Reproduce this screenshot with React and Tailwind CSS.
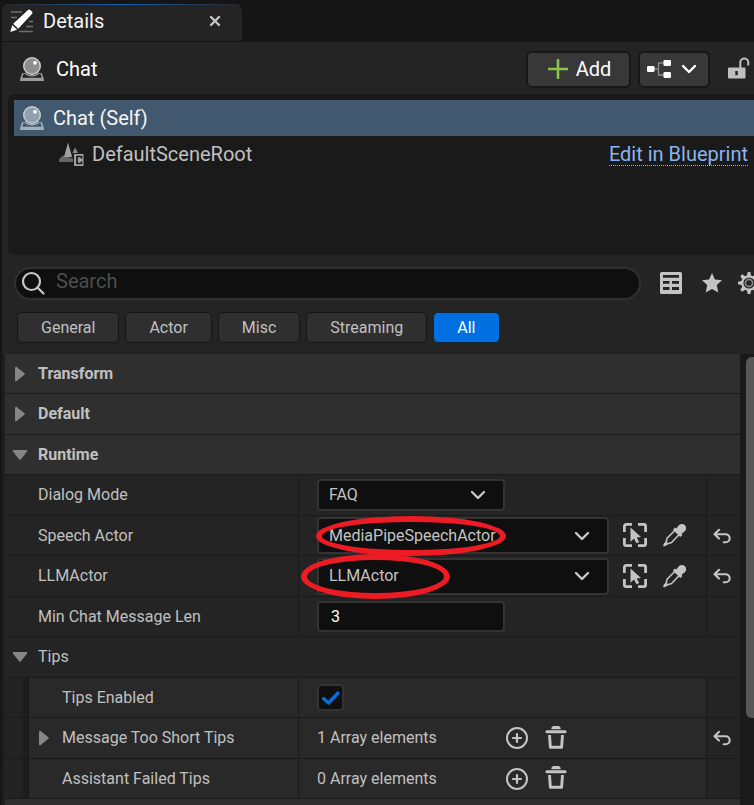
import React from "react";

function PencilIcon() {
  return (
    <svg width="24" height="24" viewBox="0 0 24 24" aria-hidden="true">
      <g stroke="#6f6f6f" strokeWidth="1.4">
        <path d="M1 3h11M1 8.500h6M19 12.500h4M16 17.500h7M9 22.500h14" />
      </g>
      <path d="M18 1a1.600 1.600 0 0 1 2.300 0l1.600 1.600a1.600 1.600 0 0 1 0 2.300L8.200 19.800l-5-5z" fill="#fff" />
      <path d="M2.400 16l4.700 4.700L.2 23z" fill="#fff" />
    </svg>
  );
}

function ActorIcon({ tint = "#8e8e8e", base = "#9c9c9c" }) {
  return (
    <svg width="24" height="24" viewBox="0 0 24 24" aria-hidden="true" className="shrink-0">
      <path d="M3 16L1.200 21.500M21 16l1.800 5.500" stroke={base} strokeWidth="1.600" />
      <path d="M.4 20.800h23.200L24 24H0z" fill={base} />
      <circle cx="12" cy="9" r="9" fill="#c9cdd0" />
      <circle cx="12" cy="9" r="7.500" fill={tint} />
      <path d="M4.500 16.200c4.500 3.300 10.500 3.300 15 0" fill="none" stroke={base} strokeWidth="1.400" />
      <circle cx="15" cy="5.800" r="1.900" fill="#fff" />
    </svg>
  );
}

function SceneIcon() {
  return (
    <svg width="26" height="24" viewBox="0 0 26 24" aria-hidden="true">
      <path d="M3.500 13.500L0 17.200V20h14v-3.500z" fill="#666666" />
      <path d="M9 .5L13.200 15H5z" fill="#a0a0a0" />
      <path d="M16 5.500l3 5.500h-5.500z" fill="#8a8a8a" />
      <rect x="15" y="12" width="9.500" height="12" fill="#a0a0a0" />
      <path d="M22.500 16.500v-2h-4.500v7h4.500v-2" fill="none" stroke="#1a1a1a" strokeWidth="1.700" />
    </svg>
  );
}

function CloseIcon() {
  return (
    <svg width="12" height="12" viewBox="0 0 12 12" aria-hidden="true">
      <path d="M2 2l8 8M10 2l-8 8" stroke="#c4c4c4" strokeWidth="2.400" strokeLinecap="round" />
    </svg>
  );
}

function Chevron({ color = "#c8c8c8" }) {
  return (
    <svg width="16" height="10" viewBox="0 0 16 10" aria-hidden="true">
      <path d="M2 2l6 6 6-6" fill="none" stroke={color} strokeWidth="2.400" strokeLinecap="round" strokeLinejoin="round" />
    </svg>
  );
}

function BlueprintIcon() {
  return (
    <svg width="24" height="18" viewBox="0 0 24 18" aria-hidden="true">
      <path d="M7 9h5M17 3h-5.500v12H17" fill="none" stroke="#8a8a8a" strokeWidth="1.300" />
      <rect x="0" y="6" width="7.500" height="6" rx="1.300" fill="#fff" />
      <rect x="16.500" y="0" width="7.500" height="6" rx="1.300" fill="#fff" />
      <rect x="16.500" y="12" width="7.500" height="6" rx="1.300" fill="#fff" />
    </svg>
  );
}

function LockIcon() {
  return (
    <svg width="22" height="22" viewBox="0 0 22 22" aria-hidden="true">
      <path d="M12.300 11V5.500a4 4 0 0 1 8 0V8.500" fill="none" stroke="#c0c0c0" strokeWidth="2" />
      <path fillRule="evenodd" d="M1 10.500h15.500a1 1 0 0 1 1 1V20.500a1 1 0 0 1-1 1H1a1 1 0 0 1-1-1V11.500a1 1 0 0 1 1-1zM7.300 14v4.300h2.500V14z" fill="#c0c0c0" />
    </svg>
  );
}

function SearchIcon() {
  return (
    <svg width="24" height="24" viewBox="0 0 24 24" aria-hidden="true">
      <circle cx="10.500" cy="10.500" r="8.500" fill="none" stroke="#c8c8c8" strokeWidth="2.200" />
      <path d="M16.500 16.500L22.500 22.500" stroke="#c8c8c8" strokeWidth="2.200" strokeLinecap="round" />
    </svg>
  );
}

function TableIcon() {
  return (
    <svg width="22" height="22" viewBox="0 0 22 22" aria-hidden="true">
      <path
        fillRule="evenodd"
        d="M1.500 0h19A1.500 1.500 0 0 1 22 1.500v19a1.500 1.500 0 0 1-1.500 1.500h-19A1.500 1.500 0 0 1 0 20.500v-19A1.500 1.500 0 0 1 1.500 0zM3 3v2.700h16V3zM3 9v2.700h6.500V9zM12 9v2.700h7V9zM3 15v3h6.500V15zM12 15v3h7V15z"
        fill="#c4c4c4"
      />
    </svg>
  );
}

function StarIcon() {
  return (
    <svg width="20" height="20" viewBox="0 0 20 20" aria-hidden="true">
      <path d="M10 0l2.900 6.400 7.100.8-5.200 4.800L16.300 19.500 10 16 3.700 19.500 5.200 12 0 7.200l7.100-.8z" fill="#c4c4c4" />
    </svg>
  );
}

const teeth = [0, 45, 90, 135, 180, 225, 270, 315];

function GearIcon() {
  return (
    <svg width="22" height="22" viewBox="0 0 22 22" aria-hidden="true">
      <circle cx="11" cy="11" r="6.700" fill="none" stroke="#c4c4c4" strokeWidth="2.200" />
      <circle cx="11" cy="11" r="3.600" fill="none" stroke="#8a8a8a" strokeWidth="1.600" />
      {teeth.map((angle) => (
        <path key={angle} d="M9.700 0h2.600l.9 4.500H8.800z" fill="#c4c4c4" transform={`rotate(${angle} 11 11)`} />
      ))}
    </svg>
  );
}

function PickIcon() {
  return (
    <svg width="24" height="24" viewBox="0 0 24 24" aria-hidden="true">
      <path d="M1.400 9V3.200a1.800 1.800 0 0 1 1.800-1.800H9M15 1.400h5.800A1.800 1.800 0 0 1 22.600 3.200V9M22.600 15v5.800a1.800 1.800 0 0 1-1.800 1.800H15M9 22.600H3.200A1.800 1.800 0 0 1 1.400 20.800V15" fill="none" stroke="#c4c4c4" strokeWidth="2.800" />
      <path d="M7.500 4.500L18 14l-4.300.4 2.500 4.600-2.800 1.300-2.300-4.800-3.600 3.200z" fill="#c4c4c4" />
    </svg>
  );
}

function DropperIcon() {
  return (
    <svg width="23" height="24" viewBox="0 0 23 24" aria-hidden="true">
      <path d="M12 7.300L4 15.300 3.200 19.300 1 22.600 4.600 20.700l4-1.200L16.200 11.500" fill="none" stroke="#c4c4c4" strokeWidth="1.600" strokeLinejoin="round" />
      <path d="M.3 21.200l1.800 1.800 3.200-2.300-2.300-2.400z" fill="#c4c4c4" />
      <path d="M15 3.200a4.300 4.300 0 1 1 5.500 6l-2 1.600 1 1.200-2.200 2L9.900 6.700l2-2.200 1.500 1z" fill="#c4c4c4" />
    </svg>
  );
}

function ResetIcon() {
  return (
    <svg width="18" height="16" viewBox="0 0 18 16" aria-hidden="true">
      <path d="M6 1.800L1.500 6.200 6 10.600M2 6.200h10.700a4 4 0 0 1 0 8h-2" fill="none" stroke="#c4c4c4" strokeWidth="2.100" strokeLinecap="round" strokeLinejoin="round" />
    </svg>
  );
}

function AddCircleIcon() {
  return (
    <svg width="22" height="22" viewBox="0 0 22 22" aria-hidden="true">
      <circle cx="11" cy="11" r="10" fill="none" stroke="#c4c4c4" strokeWidth="2" />
      <path d="M11 7v8M7 11h8" stroke="#c4c4c4" strokeWidth="2.200" strokeLinecap="round" />
    </svg>
  );
}

function TrashIcon() {
  return (
    <svg width="22" height="23" viewBox="0 0 22 23" aria-hidden="true">
      <path d="M6.300 3.200a3 3 0 0 1 2.700-3.200h4a3 3 0 0 1 2.700 3.200z" fill="#c4c4c4" />
      <rect x="0.500" y="4.300" width="21" height="3" rx="1.300" fill="#c4c4c4" />
      <path d="M4.500 9l.9 12.300h11.200L17.500 9" fill="none" stroke="#c4c4c4" strokeWidth="2.900" strokeLinejoin="round" />
    </svg>
  );
}

function Arrow({ open }) {
  return open ? (
    <svg width="16" height="10" viewBox="0 0 16 10" aria-hidden="true">
      <path d="M1.500 0h13l1 1L8.500 9.700h-1L.5 1z" fill="#868686" />
    </svg>
  ) : (
    <svg width="10" height="16" viewBox="0 0 10 16" aria-hidden="true">
      <path d="M0 1.500v13l1 1L9.700 8.500v-1L1 .5z" fill="#868686" />
    </svg>
  );
}

function Section({ title, open, odd, plain }) {
  return (
    <div className={`border-b border-[#1a1a1a] ${odd ? "h-[41px]" : "h-10"} ${plain ? "bg-[#242424]" : "bg-[#2f2f2f]"}`}>
      <button type="button" aria-expanded={!!open} className={`flex h-full w-full items-center text-left ${plain ? "" : "font-bold"}`}>
        <span className="flex w-[33px] justify-center pr-1">
          <Arrow open={open} />
        </span>
        {title}
      </button>
    </div>
  );
}

function Row({ id, label, odd, nested, expandable, reset, children }) {
  return (
    <div className={`flex border-b border-[#1a1a1a] ${odd ? "h-[41px]" : "h-10"}`}>
      {nested && <div className="w-6 shrink-0 bg-linear-to-r from-[#232323] from-60% to-[#191919]" />}
      <div
        className={`flex shrink-0 items-center border-r border-[#1a1a1a] ${nested ? "w-[270px] bg-[#292929]" : "w-[294px] bg-[#242424] pl-[33px]"}`}
      >
        {nested && (
          <span className="flex w-[33px] shrink-0 pl-[10px]">
            {expandable && (
              <button type="button" aria-label={`Expand ${label}`}>
                <Arrow />
              </button>
            )}
          </span>
        )}
        <label htmlFor={id}>{label}</label>
      </div>
      <div className={`flex min-w-0 flex-1 items-center pl-[18px] ${nested ? "bg-[#292929]" : "bg-[#242424]"}`}>{children}</div>
      <div className="flex w-[34px] shrink-0 items-center justify-center border-l border-[#1a1a1a] bg-[#242424] pr-1">
        {reset && (
          <button type="button" aria-label={`Reset ${label}`}>
            <ResetIcon />
          </button>
        )}
      </div>
    </div>
  );
}

function Dropdown({ id, value, size, children }) {
  return (
    <div className={`relative shrink-0 ${size}`}>
      <select id={id} className="h-full w-full appearance-none rounded border-2 border-[#333333] bg-[#0f0f0f] pl-[10px] text-[#c4c4c4]">
        <option>{value}</option>
      </select>
      <span className="pointer-events-none absolute inset-y-0 right-[19px] flex items-center">
        <Chevron />
      </span>
      {children}
    </div>
  );
}

function ActorTools() {
  return (
    <>
      <button type="button" aria-label="Pick actor" className="ml-[14px] shrink-0 pb-px">
        <PickIcon />
      </button>
      <button type="button" aria-label="Use eyedropper" className="ml-4 shrink-0 pb-px">
        <DropperIcon />
      </button>
    </>
  );
}

function ArrayValue({ id, count }) {
  return (
    <>
      <output id={id} className="w-[189px] shrink-0">
        {count} Array elements
      </output>
      <button type="button" aria-label="Add element">
        <AddCircleIcon />
      </button>
      <button type="button" aria-label="Clear elements" className="ml-[17px] pb-[2px]">
        <TrashIcon />
      </button>
    </>
  );
}

const filters = ["General", "Actor", "Misc", "Streaming", "All"];

export default function App() {
  return (
    <div className="min-h-screen overflow-hidden border-l-2 border-[#151515] bg-[#242424] font-[Roboto,sans-serif] text-base text-[#c0c0c0]">
      <header className="flex h-[42px] items-end border-b border-[#151515] bg-[#151515]">
        <div className="w-60 overflow-hidden rounded-t-md bg-[#242424]">
          <div className="h-px bg-linear-to-r from-[#242424] via-[#0c64b8] to-[#242424]" />
          <div className="flex h-9 items-center pr-[21px] pb-1 pl-2">
            <PencilIcon />
            <span className="ml-[9px] flex-1 text-xl text-[#f4f4f4]">Details</span>
            <button type="button" aria-label="Close tab">
              <CloseIcon />
            </button>
          </div>
        </div>
      </header>

      <div className="flex h-[52px] items-center pt-[2px] pr-1 pl-[18px]">
        <ActorIcon />
        <h1 className="ml-3 flex-1 text-xl text-white">Chat</h1>
        <button type="button" className="flex h-[37px] w-[105px] items-center justify-center gap-2 rounded-md border-2 border-[#181818] bg-[#383838] pl-[2px] text-xl text-white">
          <svg width="20" height="20" viewBox="0 0 20 20" aria-hidden="true">
            <path d="M10 1v18M1 10h18" stroke="#8bc24a" strokeWidth="2.600" strokeLinecap="round" />
          </svg>
          Add
        </button>
        <button type="button" aria-label="Blueprint options" className="ml-[7px] flex h-[37px] w-[72px] items-center justify-center gap-[10px] rounded-md border-2 border-[#181818] bg-[#383838] pr-1">
          <BlueprintIcon />
          <Chevron color="#ffffff" />
        </button>
        <button type="button" aria-label="Lock details" className="ml-[18px] pb-[3px]">
          <LockIcon />
        </button>
      </div>

      <div className="ml-[6px] h-[161px] rounded-l-md bg-[#1a1a1a] pt-[6px] pl-[6px] text-xl">
        <div className="flex h-9 items-center bg-[#42586f] pl-[6px] text-[#f4f4f4]">
          <ActorIcon tint="#8fa0b0" base="#a4b0ba" />
          <span className="ml-[9px]">Chat (Self)</span>
        </div>
        <div className="flex h-9 items-center pr-[6px] pl-[45px]">
          <SceneIcon />
          <span className="ml-[7px] flex-1">DefaultSceneRoot</span>
          <a href="#blueprint" className="border-b border-dotted border-[#8ab4f0] leading-[22px] text-[#8ab4f0]">
            Edit in Blueprint
          </a>
        </div>
      </div>

      <div className="mt-3 flex items-center pl-3">
        <div className="flex h-[33px] min-w-0 flex-1 items-center rounded-full border-2 border-[#303030] bg-[#0f0f0f] pb-[2px] pl-[5px]">
          <SearchIcon />
          <input
            type="text"
            aria-label="Search details"
            placeholder="Search"
            className="ml-[11px] h-6 min-w-0 flex-1 bg-transparent pb-1 text-xl outline-none placeholder:text-[#4d4d4d]"
          />
        </div>
        <button type="button" aria-label="Property matrix" className="ml-[19px] shrink-0 pb-[2px]">
          <TableIcon />
        </button>
        <button type="button" aria-label="Favorites" className="ml-5 shrink-0 pb-[2px]">
          <StarIcon />
        </button>
        <button type="button" aria-label="Settings" className="-mr-[6px] ml-4 shrink-0 pb-[2px]">
          <GearIcon />
        </button>
      </div>

      <div className="mt-3 flex gap-[6px] pl-[15px]">
        {filters.map((name) => (
          <button
            key={name}
            type="button"
            className={`h-[31px] rounded-[5px] border px-[23px] ${name === "All" ? "border-[#10233a] bg-[#0070e0] text-white" : "border-[#151515] bg-[#2f2f2f]"}`}
          >
            {name}
          </button>
        ))}
      </div>

      <div className="mt-[11px] flex bg-[#1a1a1a]">
        <div className="w-[3px] shrink-0 bg-[#1e1e1e]" />
        <div className="min-w-0 flex-1">
          <Section title="Transform" />
          <Section title="Default" odd />
          <Section title="Runtime" open />
          <Row id="dialog-mode" label="Dialog Mode" odd>
            <Dropdown id="dialog-mode" value="FAQ" size="h-8 w-[188px]" />
          </Row>
          <Row id="speech-actor" label="Speech Actor" reset>
            <Dropdown id="speech-actor" value="MediaPipeSpeechActor" size="h-[37px] w-[292px]">
              <span className="pointer-events-none absolute -top-px -left-px h-10 w-[190px] rounded-[50%] border-6 border-[#ed1c24]" />
            </Dropdown>
            <ActorTools />
          </Row>
          <Row id="llm-actor" label="LLMActor" odd reset>
            <Dropdown id="llm-actor" value="LLMActor" size="h-[37px] w-[292px]">
              <span className="pointer-events-none absolute -top-1 -left-4 h-[45px] w-[149px] rounded-[50%] border-6 border-[#ed1c24]" />
            </Dropdown>
            <ActorTools />
          </Row>
          <Row id="min-chat" label="Min Chat Message Len">
            <input id="min-chat" type="text" defaultValue="3" className="h-[31px] w-[188px] rounded border-2 border-[#333333] bg-[#0f0f0f] pl-3 text-white" />
          </Row>
          <Section title="Tips" open odd plain />
          <Row id="tips-enabled" label="Tips Enabled" nested>
            <span className="relative flex">
              <input id="tips-enabled" type="checkbox" defaultChecked className="peer size-[27px] appearance-none rounded border-2 border-[#333333] bg-[#0f0f0f]" />
              <svg width="27" height="27" viewBox="0 0 27 27" aria-hidden="true" className="pointer-events-none absolute inset-0 hidden peer-checked:block">
                <path d="M6.500 14.500l5 4.500L21 9" fill="none" stroke="#0070e0" strokeWidth="3.300" strokeLinecap="round" strokeLinejoin="round" />
              </svg>
            </span>
          </Row>
          <Row id="short-tips" label="Message Too Short Tips" nested expandable odd reset>
            <ArrayValue id="short-tips" count={1} />
          </Row>
          <Row id="failed-tips" label="Assistant Failed Tips" nested>
            <ArrayValue id="failed-tips" count={0} />
          </Row>
          <div className="h-[6px] bg-[#2f2f2f]" />
        </div>
        <div className="w-[14px] shrink-0 pt-[3px] pl-[6px]">
          <div className="h-[361px] rounded-l-md bg-[#575757]" />
        </div>
      </div>
    </div>
  );
}
